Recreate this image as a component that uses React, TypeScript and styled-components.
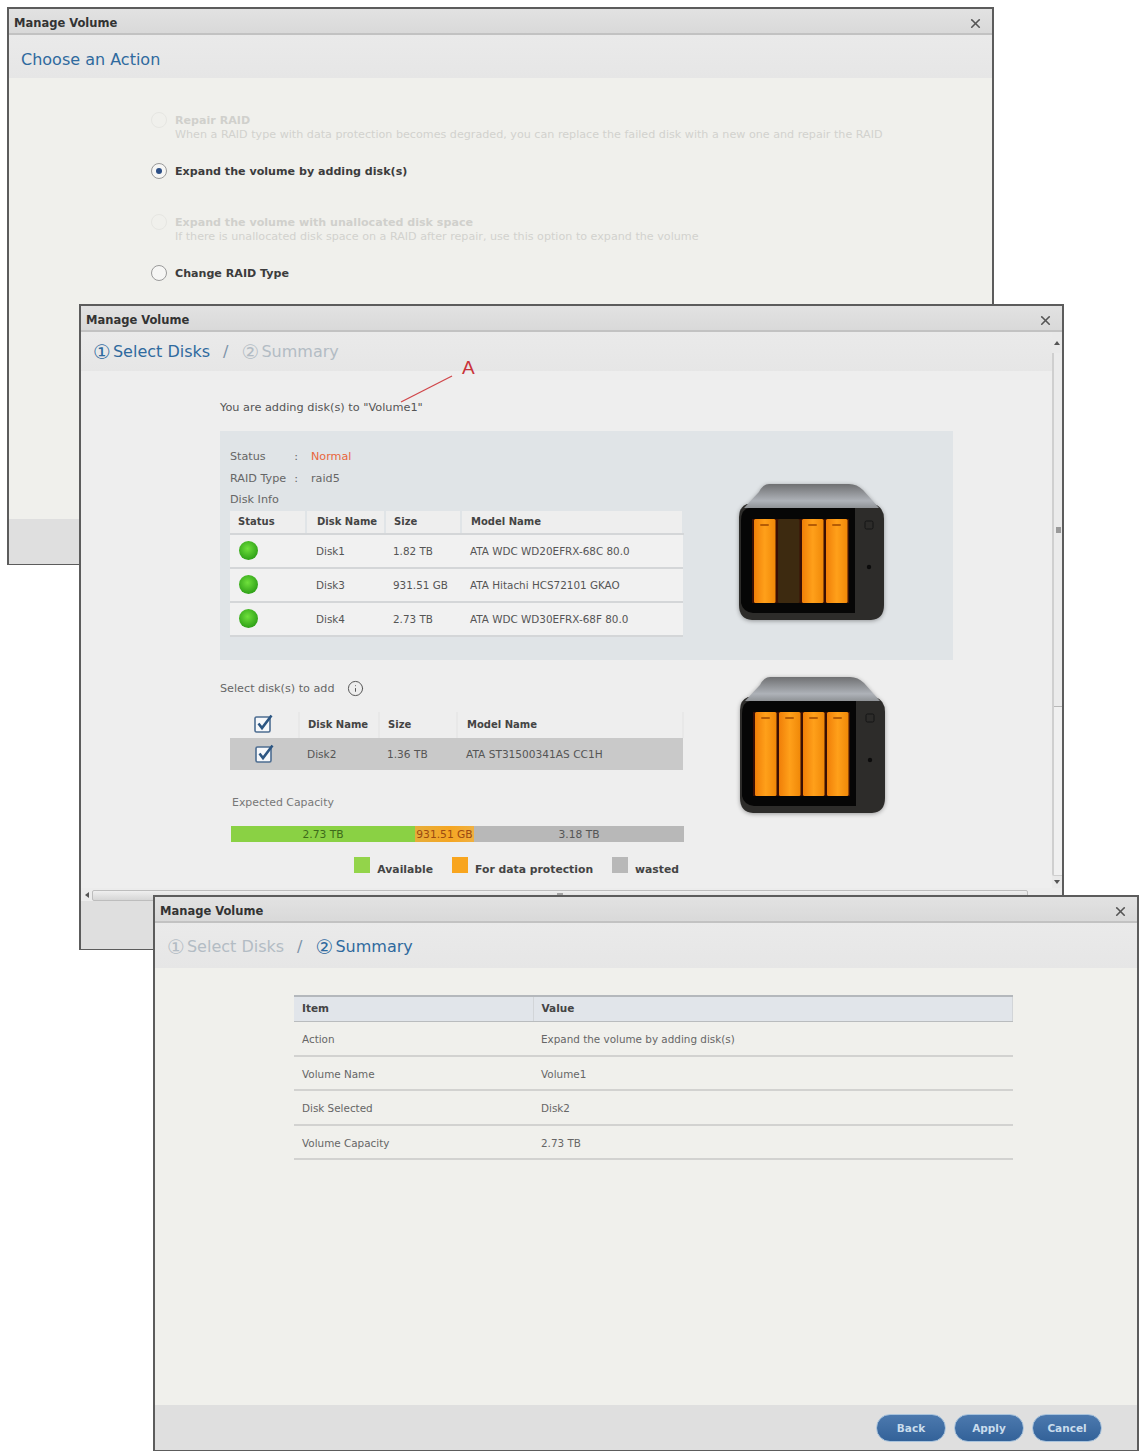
import styled, { createGlobalStyle } from "styled-components";
import { Info, X } from "lucide-react";

const GlobalStyle = createGlobalStyle`
  html, body {
    margin: 0;
    background: #fff;
    font-family: "DejaVu Sans", Verdana, sans-serif;
    font-size: 10px;
    color: #555;
  }
`;

const Desktop = styled.div`
  position: relative;
  width: 1142px;
  height: 1451px;
  overflow: hidden;
  background: #fff;
`;

const Win = styled.section<{ $left: number; $top: number; $width: number; $height: number }>`
  position: absolute;
  left: ${({ $left }) => $left}px;
  top: ${({ $top }) => $top}px;
  width: ${({ $width }) => $width}px;
  height: ${({ $height }) => $height}px;
  box-sizing: border-box;
  display: flex;
  flex-direction: column;
  border: 2px solid #5c5c5c;
  border-bottom-width: 1px;
  background: #f0f0ec;
  overflow: hidden;
`;

const TitleBar = styled.header`
  flex: none;
  height: 26px;
  box-sizing: border-box;
  padding: 4px 9px 0 5px;
  display: flex;
  align-items: center;
  justify-content: space-between;
  background: linear-gradient(#e2e2e2, #d9d9d9);
  border-bottom: 2px solid #c2c2c2;
  font-size: 11.5px;
  font-weight: 700;
  color: #333;
`;

const Heading = styled.div<{ $height: number; $drop?: number }>`
  flex: none;
  height: ${({ $height }) => $height}px;
  box-sizing: border-box;
  padding: ${({ $drop }) => $drop || 0}px 0 0 12px;
  display: flex;
  align-items: center;
  gap: 13px;
  background: linear-gradient(#eaeaea, #e6e6e6);
  font-size: 16px;
  color: #2f6a9e;
`;

const Step = styled.span<{ $active?: boolean }>`
  display: flex;
  align-items: center;
  gap: 2px;
  color: ${({ $active }) => ($active ? "#2f6a9e" : "#b3bcc4")};
`;

const StepNumber = styled.span`
  font-size: 20px;
  line-height: 20px;
`;

const StepSlash = styled.span`
  color: #7d93a8;
`;

const Footer = styled.footer<{ $height: number }>`
  flex: none;
  height: ${({ $height }) => $height}px;
  box-sizing: border-box;
  padding-right: 35px;
  display: flex;
  align-items: center;
  justify-content: flex-end;
  gap: 8px;
  background: #dfdfdf;
`;

const Button = styled.button`
  width: 70px;
  height: 28px;
  padding: 0;
  border: 1px solid #a9c3dc;
  border-radius: 14px;
  background: linear-gradient(#4c79ae, #336299);
  font-family: inherit;
  font-size: 10.5px;
  font-weight: 700;
  color: #c9dcec;
`;

/* first window */
const Options = styled.div`
  flex: 1;
  padding: 36px 0 0 142px;
  display: flex;
  flex-direction: column;
  gap: 23px;
`;

const Option = styled.div`
  min-height: 28px;
  display: flex;
  gap: 8px;
`;

const Radio = styled.span<{ $checked?: boolean; $disabled?: boolean }>`
  flex: none;
  width: 16px;
  height: 16px;
  margin-top: -2px;
  box-sizing: border-box;
  display: flex;
  align-items: center;
  justify-content: center;
  border-radius: 50%;
  border: 1.5px solid ${({ $disabled }) => ($disabled ? "#e6e6e2" : "#9a9a9a")};
  background: ${({ $disabled }) => ($disabled ? "#f0f0ec" : "#f6f6f4")};
  &::after {
    content: "";
    display: ${({ $checked }) => ($checked ? "block" : "none")};
    width: 6px;
    height: 6px;
    border-radius: 50%;
    background: #2c4f86;
  }
`;

const OptionText = styled.div`
  display: flex;
  flex-direction: column;
`;

const OptionLabel = styled.div<{ $disabled?: boolean }>`
  line-height: 14px;
  font-weight: 700;
  font-size: 11.1px;
  color: ${({ $disabled }) => ($disabled ? "#d0d0cc" : "#3c3c3c")};
`;

const OptionHint = styled.div`
  line-height: 14px;
  font-size: 11.15px;
  color: #d2d2ce;
  white-space: nowrap;
`;

/* second window */
const ScrollArea = styled.div`
  flex: 1;
  min-height: 0;
  display: flex;
`;

const ScrollContent = styled.div`
  flex: 1;
  min-width: 0;
  display: flex;
  flex-direction: column;
  overflow: hidden;
  background: #eeeeee;
`;

const Page = styled.div`
  padding-left: 139px;
`;

const Intro = styled.div`
  margin-top: 30px;
  line-height: 14px;
  font-size: 11.3px;
  color: #555;
`;

const Panel = styled.div`
  width: 733px;
  height: 229px;
  margin-top: 16px;
  box-sizing: border-box;
  padding: 15px 0 0 10px;
  display: flex;
  background: #e0e4e7;
`;

const InfoLine = styled.div`
  height: 21.5px;
  display: flex;
  align-items: center;
  font-size: 11.2px;
  color: #666;
`;

const InfoKey = styled.span`
  width: 81px;
  box-sizing: border-box;
  padding-right: 13px;
  display: flex;
  justify-content: space-between;
  white-space: nowrap;
`;

const InfoValue = styled.span<{ $tone?: string }>`
  color: ${({ $tone }) => $tone || "#666"};
`;

const NasSlot = styled.div<{ $top: number }>`
  flex: none;
  margin: ${({ $top }) => $top}px 0 0 53px;
  filter: drop-shadow(0 1px 2px rgba(0, 0, 0, 0.35));
`;

const DiskTable = styled.table<{ $indent?: number }>`
  width: 454px;
  margin-left: ${({ $indent }) => $indent || 0}px;
  border-collapse: collapse;
  table-layout: fixed;
`;

const HeadCell = styled.th<{ $width?: number; $pad?: number }>`
  width: ${({ $width }) => ($width ? `${$width}px` : "auto")};
  height: 23px;
  box-sizing: border-box;
  padding: 0 0 0 ${({ $pad }) => $pad ?? 8}px;
  text-align: left;
  font-size: 10px;
  font-weight: 700;
  color: #444;
  background: #eeeeee;
  border-right: 2px solid #e0e4e7;
  border-bottom: 2px solid #d4d6d8;
`;

const BodyCell = styled.td<{ $pad?: number }>`
  height: 34px;
  box-sizing: border-box;
  padding: 0 0 0 ${({ $pad }) => $pad ?? 8}px;
  font-size: 10.4px;
  color: #555;
  white-space: nowrap;
  background: #f1f1f1;
  border-bottom: 2px solid #d4d6d8;
`;

const Led = styled.span`
  display: block;
  width: 19px;
  height: 19px;
  border-radius: 50%;
  background: radial-gradient(circle at 45% 40%, #6fe03c, #2d9f16 75%, #1f8a10);
`;

const AddSection = styled.div`
  margin-top: 16px;
  display: flex;
`;

const AddColumn = styled.div`
  flex: none;
  width: 465px;
  padding-top: 4px;
`;

const SelectLine = styled.div`
  height: 16px;
  margin-bottom: 16px;
  display: flex;
  align-items: center;
  gap: 12px;
  font-size: 11.2px;
  color: #666;
`;

const AddHeadCell = styled.th<{ $width?: number; $pad?: number }>`
  width: ${({ $width }) => ($width ? `${$width}px` : "auto")};
  height: 26px;
  box-sizing: border-box;
  padding: 0 0 2px ${({ $pad }) => $pad ?? 8}px;
  text-align: left;
  font-size: 10px;
  font-weight: 700;
  color: #444;
  border-right: 2px solid #e8e8e8;
`;

const SelectedCell = styled.td<{ $pad?: number }>`
  height: 32px;
  box-sizing: border-box;
  padding: 0 0 0 ${({ $pad }) => $pad ?? 8}px;
  font-size: 10.6px;
  color: #555;
  white-space: nowrap;
  background: #c9c9c9;
`;

const CheckCell = styled.div`
  display: flex;
  justify-content: center;
`;

const CapacityLabel = styled.div`
  margin: 26px 0 0 12px;
  line-height: 14px;
  font-size: 10.9px;
  color: #777;
`;

const Bar = styled.div`
  width: 453px;
  height: 16px;
  margin: 16px 0 0 11px;
  display: flex;
`;

const BarPart = styled.div<{ $width: number; $bg: string; $tone: string }>`
  width: ${({ $width }) => $width}px;
  display: flex;
  align-items: center;
  justify-content: center;
  background: ${({ $bg }) => $bg};
  color: ${({ $tone }) => $tone};
  font-size: 10.7px;
  white-space: nowrap;
`;

const Legend = styled.div`
  width: 459px;
  margin-top: 15px;
  display: flex;
  justify-content: flex-end;
  gap: 19px;
`;

const LegendItem = styled.div`
  display: flex;
  gap: 7px;
  font-size: 10.8px;
  font-weight: 700;
  color: #444;
`;

const Swatch = styled.span<{ $bg: string }>`
  width: 16px;
  height: 16px;
  background: ${({ $bg }) => $bg};
`;

const LegendText = styled.span`
  margin-top: 6px;
`;

const VTrack = styled.div`
  flex: none;
  width: 10px;
  box-sizing: border-box;
  padding-top: 9px;
  display: flex;
  flex-direction: column;
  align-items: center;
  background: #e9e9e9;
`;

const ArrowUp = styled.span`
  flex: none;
  width: 0;
  height: 0;
  margin-bottom: 8px;
  border: 3px solid transparent;
  border-top: 0;
  border-bottom: 4px solid #555;
`;

const ArrowDown = styled(ArrowUp)`
  margin: 4px 0 0;
  border: 3px solid transparent;
  border-bottom: 0;
  border-top: 4px solid #555;
`;

const VGutter = styled.div`
  flex: none;
  width: 100%;
  height: 523px;
  box-sizing: border-box;
  border-left: 2px solid #cfcfcf;
  border-bottom: 1px solid #cfcfcf;
  border-radius: 0 0 0 2px;
  background: #f0f0f0;
`;

const VThumb = styled.div`
  height: 354px;
  box-sizing: border-box;
  display: flex;
  align-items: center;
  justify-content: center;
  border-bottom: 1px solid #b8b8b8;
  background: #ebebeb;
  &::after {
    content: "";
    width: 5px;
    height: 6px;
    background: #9a9a9a;
  }
`;

const HTrack = styled.div`
  flex: none;
  height: 13px;
  box-sizing: border-box;
  padding: 1px 34px 0 4px;
  display: flex;
  align-items: center;
  background: #ececec;
`;

const ArrowLeft = styled.span`
  flex: none;
  width: 0;
  height: 0;
  margin-right: 3px;
  border: 3px solid transparent;
  border-left: 0;
  border-right: 4px solid #555;
`;

const HThumb = styled.div`
  flex: 1;
  height: 11px;
  box-sizing: border-box;
  display: flex;
  align-items: center;
  justify-content: center;
  border: 1px solid #bdbdbd;
  border-radius: 2px;
  background: linear-gradient(#efefef, #d6d6d6);
  &::after {
    content: "";
    width: 6px;
    height: 5px;
    background: #a2a2a2;
  }
`;

const Callout = styled.svg`
  position: absolute;
  left: 396px;
  top: 372px;
`;

const CalloutLetter = styled.span`
  position: absolute;
  left: 462px;
  top: 357px;
  font-size: 19px;
  line-height: 22px;
  color: #c9323a;
  font-family: "Liberation Sans", Arial, sans-serif;
`;

/* third window */
const SummaryBody = styled.div`
  flex: 1;
  padding: 27px 0 0 139px;
`;

const SummaryTable = styled.table`
  width: 719px;
  border-collapse: collapse;
  table-layout: fixed;
`;

const SummaryHead = styled.th<{ $width?: number }>`
  width: ${({ $width }) => ($width ? `${$width}px` : "auto")};
  height: 25px;
  box-sizing: border-box;
  padding: 0 0 2px 8px;
  text-align: left;
  font-size: 10.5px;
  font-weight: 700;
  color: #444;
  background: #e1e5ea;
  border-top: 2px solid #b4b8bc;
  border-right: 1px solid #d2d5d8;
  border-bottom: 1px solid #b9bcbe;
`;

const SummaryCell = styled.td`
  height: 34.6px;
  box-sizing: border-box;
  padding: 2px 0 0 8px;
  font-size: 10.4px;
  color: #666;
  border-bottom: 2px solid #d2d2d0;
`;

const Box = styled.svg`
  display: block;
`;

const CheckMark = () => (
  <Box width="20" height="20" viewBox="0 0 20 20">
    <rect x="1" y="3" width="15" height="15" rx="1.5" fill="#f6f8fb" stroke="#4d6d91" strokeWidth="1.6" />
    <path d="M4.5 9.5 L8 14 L17.5 1.5" fill="none" stroke="#2c5683" strokeWidth="2.6" />
  </Box>
);

const Nas = ({ empty }: { empty?: number }) => (
  <Box width="148" height="140" viewBox="0 0 148 140">
    <defs>
      <linearGradient id="lid" x1="0" y1="0" x2="0" y2="1">
        <stop offset="0" stopColor="#6f7072" />
        <stop offset="0.7" stopColor="#aeb2b8" />
        <stop offset="1" stopColor="#8f9296" />
      </linearGradient>
      <linearGradient id="bay" x1="0" y1="0" x2="1" y2="0">
        <stop offset="0" stopColor="#f07f08" />
        <stop offset="0.5" stopColor="#ffa01a" />
        <stop offset="1" stopColor="#f08808" />
      </linearGradient>
    </defs>
    <path d="M2 34 Q2 24 10 21 H137 Q147 24 147 36 V122 Q147 136 134 137 H15 Q2 136 2 122 Z" fill="#2d2c2a" />
    <path d="M32 1 H112 Q120 1 126 7 L142 25 H7 L22 9 Q26 1 32 1 Z" fill="url(#lid)" />
    <path d="M4 38 Q4 26 12 25 H118 V130 H16 Q6 129 4 120 Z" fill="#060606" />
    <rect x="15" y="36" width="97" height="84" fill="#3a0f04" />
    {[17, 41, 65, 89].map((x, i) => (
      <g key={x}>
        <rect x={x} y="36" width="21.5" height="84" rx="1.5" fill={i === empty ? "#3d2a10" : "url(#bay)"} />
        {i !== empty && <rect x={x + 6} y="41" width="9" height="2" rx="1" fill="#b55c05" />}
      </g>
    ))}
    <rect x="128" y="38" width="8" height="8" rx="1.5" fill="none" stroke="#151515" />
    <circle cx="132" cy="84" r="2.2" fill="#0c0c0c" />
  </Box>
);

const Close = () => <X size={15} strokeWidth={2.6} color="#555" />;

export default function App() {
  return (
    <Desktop>
      <GlobalStyle />

      <Win $left={7} $top={7} $width={987} $height={558}>
        <TitleBar>
          Manage Volume
          <Close />
        </TitleBar>
        <Heading $height={43} $drop={6}>Choose an Action</Heading>
        <Options>
          <Option>
            <Radio $disabled />
            <OptionText>
              <OptionLabel $disabled>Repair RAID</OptionLabel>
              <OptionHint>When a RAID type with data protection becomes degraded, you can replace the failed disk with a new one and repair the RAID</OptionHint>
            </OptionText>
          </Option>
          <Option>
            <Radio $checked />
            <OptionLabel>Expand the volume by adding disk(s)</OptionLabel>
          </Option>
          <Option>
            <Radio $disabled />
            <OptionText>
              <OptionLabel $disabled>Expand the volume with unallocated disk space</OptionLabel>
              <OptionHint>If there is unallocated disk space on a RAID after repair, use this option to expand the volume</OptionHint>
            </OptionText>
          </Option>
          <Option>
            <Radio />
            <OptionLabel>Change RAID Type</OptionLabel>
          </Option>
        </Options>
        <Footer $height={45} />
      </Win>

      <Win $left={79} $top={304} $width={985} $height={646}>
        <TitleBar>
          Manage Volume
          <Close />
        </TitleBar>
        <ScrollArea>
          <ScrollContent>
            <Heading $height={39}>
              <Step $active><StepNumber>①</StepNumber> Select Disks</Step>
              <StepSlash>/</StepSlash>
              <Step><StepNumber>②</StepNumber> Summary</Step>
            </Heading>
            <Page>
              <Intro>You are adding disk(s) to "Volume1"</Intro>
              <Panel>
                <div>
                  <InfoLine>
                    <InfoKey>Status<span>:</span></InfoKey>
                    <InfoValue $tone="#e8663c">Normal</InfoValue>
                  </InfoLine>
                  <InfoLine>
                    <InfoKey>RAID Type<span>:</span></InfoKey>
                    <InfoValue>raid5</InfoValue>
                  </InfoLine>
                  <InfoLine>Disk Info</InfoLine>
                  <DiskTable>
                    <thead>
                      <tr>
                        <HeadCell $width={76}>Status</HeadCell>
                        <HeadCell $width={79} $pad={10}>Disk Name</HeadCell>
                        <HeadCell $width={76}>Size</HeadCell>
                        <HeadCell $pad={9}>Model Name</HeadCell>
                      </tr>
                    </thead>
                    <tbody>
                      <tr>
                        <BodyCell $pad={9}><Led /></BodyCell>
                        <BodyCell $pad={10}>Disk1</BodyCell>
                        <BodyCell>1.82 TB</BodyCell>
                        <BodyCell $pad={9}>ATA WDC WD20EFRX-68C 80.0</BodyCell>
                      </tr>
                      <tr>
                        <BodyCell $pad={9}><Led /></BodyCell>
                        <BodyCell $pad={10}>Disk3</BodyCell>
                        <BodyCell>931.51 GB</BodyCell>
                        <BodyCell $pad={9}>ATA Hitachi HCS72101 GKAO</BodyCell>
                      </tr>
                      <tr>
                        <BodyCell $pad={9}><Led /></BodyCell>
                        <BodyCell $pad={10}>Disk4</BodyCell>
                        <BodyCell>2.73 TB</BodyCell>
                        <BodyCell $pad={9}>ATA WDC WD30EFRX-68F 80.0</BodyCell>
                      </tr>
                    </tbody>
                  </DiskTable>
                </div>
                <NasSlot $top={37}><Nas empty={1} /></NasSlot>
              </Panel>
              <AddSection>
                <AddColumn>
                  <SelectLine>
                    Select disk(s) to add
                    <Info size={17} strokeWidth={1.4} color="#555" />
                  </SelectLine>
                  <DiskTable $indent={10}>
                    <thead>
                      <tr>
                        <AddHeadCell $width={69} $pad={0}><CheckCell><CheckMark /></CheckCell></AddHeadCell>
                        <AddHeadCell $width={80}>Disk Name</AddHeadCell>
                        <AddHeadCell $width={78}>Size</AddHeadCell>
                        <AddHeadCell $pad={9}>Model Name</AddHeadCell>
                      </tr>
                    </thead>
                    <tbody>
                      <tr>
                        <SelectedCell $pad={0}><CheckCell><CheckMark /></CheckCell></SelectedCell>
                        <SelectedCell>Disk2</SelectedCell>
                        <SelectedCell>1.36 TB</SelectedCell>
                        <SelectedCell $pad={9}>ATA ST31500341AS CC1H</SelectedCell>
                      </tr>
                    </tbody>
                  </DiskTable>
                  <CapacityLabel>Expected Capacity</CapacityLabel>
                  <Bar>
                    <BarPart $width={184} $bg="#8ad144" $tone="#3d6a1a">2.73 TB</BarPart>
                    <BarPart $width={59} $bg="linear-gradient(90deg, #e6ad3a, #f5a623 60%, #f0b040)" $tone="#9c4a10">931.51 GB</BarPart>
                    <BarPart $width={210} $bg="#b8b8b8" $tone="#555">3.18 TB</BarPart>
                  </Bar>
                  <Legend>
                    <LegendItem><Swatch $bg="#93d44a" /><LegendText>Available</LegendText></LegendItem>
                    <LegendItem><Swatch $bg="#f8a51e" /><LegendText>For data protection</LegendText></LegendItem>
                    <LegendItem><Swatch $bg="#b8b8b8" /><LegendText>wasted</LegendText></LegendItem>
                  </Legend>
                </AddColumn>
                <NasSlot $top={0}><Nas /></NasSlot>
              </AddSection>
            </Page>
          </ScrollContent>
          <VTrack>
            <ArrowUp />
            <VGutter>
              <VThumb />
            </VGutter>
            <ArrowDown />
          </VTrack>
        </ScrollArea>
        <HTrack>
          <ArrowLeft />
          <HThumb />
        </HTrack>
        <Footer $height={48} />
      </Win>

      <Callout width="60" height="34" viewBox="0 0 60 34">
        <line x1="5" y1="30" x2="56" y2="4" stroke="#d0464a" strokeWidth="1.3" />
      </Callout>
      <CalloutLetter>A</CalloutLetter>

      <Win $left={153} $top={895} $width={986} $height={556}>
        <TitleBar>
          Manage Volume
          <Close />
        </TitleBar>
        <Heading $height={45} $drop={2}>
          <Step><StepNumber>①</StepNumber> Select Disks</Step>
          <StepSlash>/</StepSlash>
          <Step $active><StepNumber>②</StepNumber> Summary</Step>
        </Heading>
        <SummaryBody>
          <SummaryTable>
            <thead>
              <tr>
                <SummaryHead $width={239}>Item</SummaryHead>
                <SummaryHead>Value</SummaryHead>
              </tr>
            </thead>
            <tbody>
              <tr><SummaryCell>Action</SummaryCell><SummaryCell>Expand the volume by adding disk(s)</SummaryCell></tr>
              <tr><SummaryCell>Volume Name</SummaryCell><SummaryCell>Volume1</SummaryCell></tr>
              <tr><SummaryCell>Disk Selected</SummaryCell><SummaryCell>Disk2</SummaryCell></tr>
              <tr><SummaryCell>Volume Capacity</SummaryCell><SummaryCell>2.73 TB</SummaryCell></tr>
            </tbody>
          </SummaryTable>
        </SummaryBody>
        <Footer $height={45}>
          <Button>Back</Button>
          <Button>Apply</Button>
          <Button>Cancel</Button>
        </Footer>
      </Win>
    </Desktop>
  );
}
